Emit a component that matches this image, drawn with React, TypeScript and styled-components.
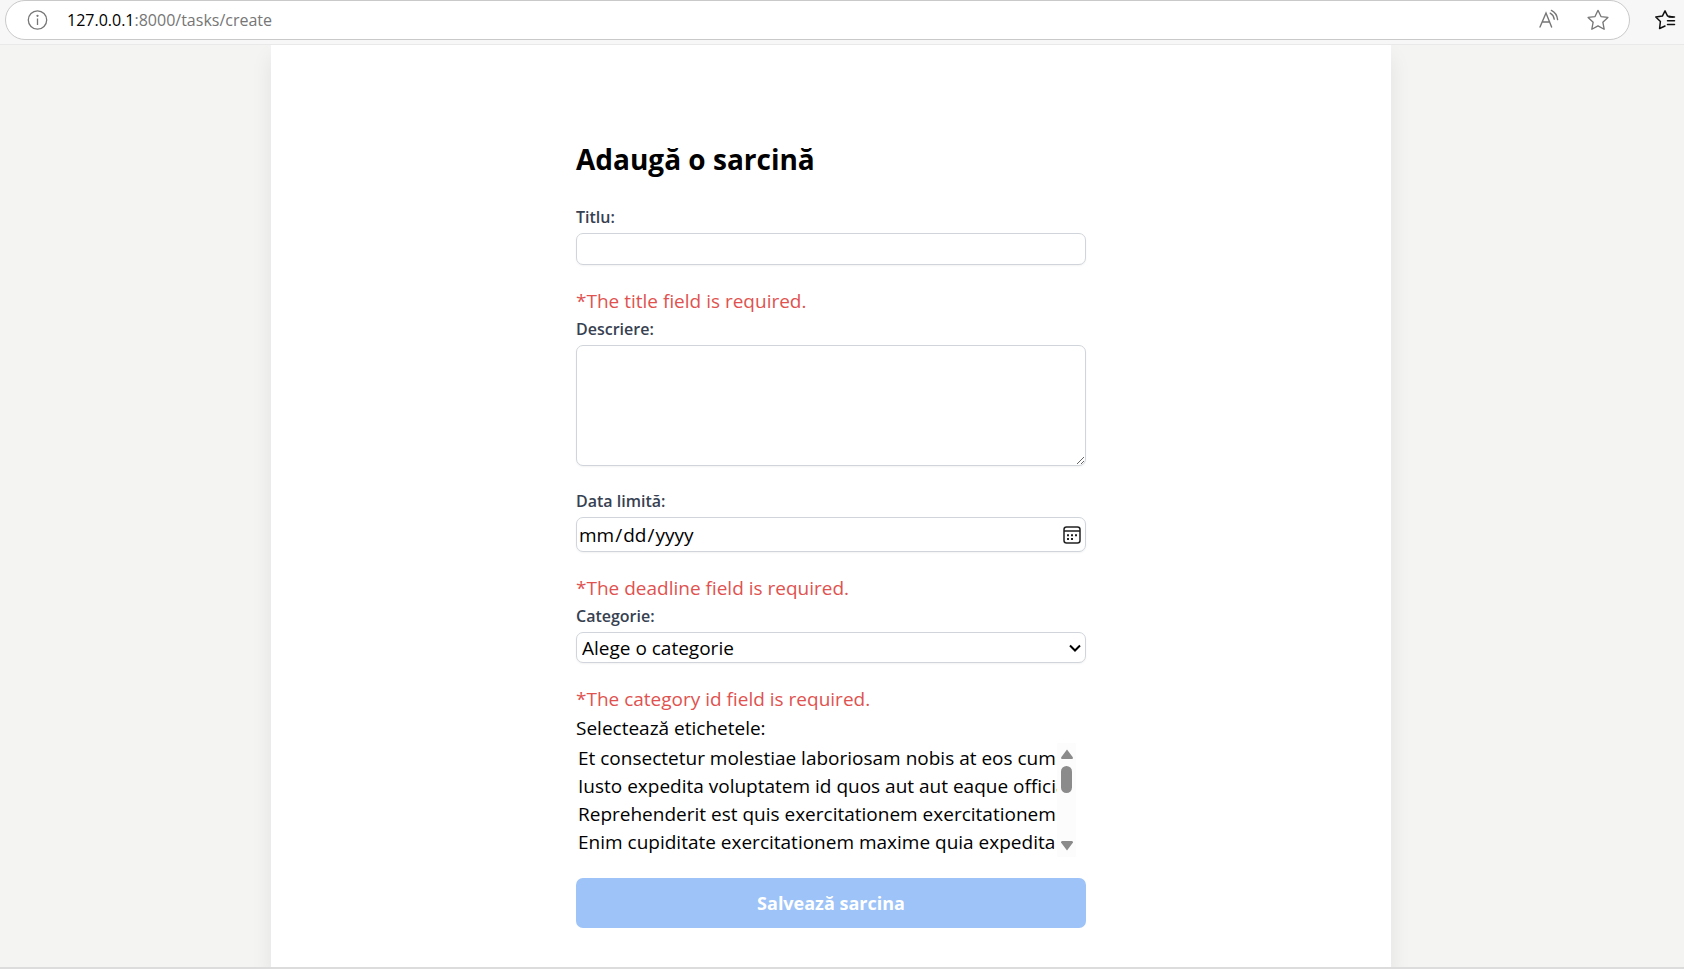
import React from "react";
import styled, { createGlobalStyle } from "styled-components";

const GlobalStyle = createGlobalStyle`
  *, *::before, *::after { box-sizing: border-box; }
  html, body, #root { height: 100%; }
  body {
    margin: 0;
    background: #f4f4f3;
    color: #000;
    font-family: "Open Sans", "Noto Sans", sans-serif;
    font-size: 19px;
  }
  button, input, select, textarea { font: inherit; color: inherit; margin: 0; }
`;

const Window = styled.div`
  display: flex;
  flex-direction: column;
  min-height: 100%;
  border-bottom: 2px solid #dcdcdc;
`;

const Toolbar = styled.header`
  display: flex;
  align-items: center;
  height: 45px;
  padding: 0 8px 5px 5px;
  gap: 24px;
  background: #f7f7f7;
  border-bottom: 1px solid #e9e9e9;
`;

const AddressBar = styled.div`
  display: flex;
  flex: 1;
  align-items: center;
  height: 40px;
  padding: 0 20px;
  background: #fff;
  border: 1px solid #c9c9c9;
  border-radius: 20px;
`;

const IconButton = styled.button<{ $dark?: boolean }>`
  display: flex;
  padding: 0;
  border: 0;
  background: none;
  color: ${(p) => (p.$dark ? "#111" : "#767676")};
`;

const Url = styled.div`
  flex: 1;
  padding-left: 19px;
  font-size: 16px;
  line-height: 24px;
  color: #767676;
`;

const Host = styled.span`
  color: #000;
`;

const BarActions = styled.div`
  display: flex;
  gap: 28px;
`;

const Content = styled.main`
  display: flex;
  flex: 1;
  justify-content: center;
  padding: 0 22px 0 0;
  overflow: hidden;
`;

const Sheet = styled.div`
  width: 100%;
  max-width: 1120px;
  padding: 94px 16px 39px;
  background: #fff;
  box-shadow: 0 12px 20px rgba(0, 0, 0, 0.08);
`;

const Form = styled.form`
  display: flex;
  flex-direction: column;
  width: 100%;
  max-width: 510px;
  margin: 0 auto;
`;

const Title = styled.h1`
  margin: 0 0 25px;
  font-size: 28px;
  font-weight: 700;
  line-height: 40px;
`;

const Label = styled.label`
  margin-bottom: 2px;
  font-size: 16px;
  font-weight: 600;
  line-height: 27px;
  color: #374151;
`;

const ListLabel = styled.label`
  line-height: 29px;
`;

const Control = styled.div<{ $height: number }>`
  display: flex;
  position: relative;
  height: ${(p) => p.$height}px;
  margin-bottom: 22px;

  & > input, & > select, & > textarea {
    width: 100%;
    padding: 0 1px;
    background: #fff;
    border: 1px solid #d1d5db;
    border-radius: 7px;
    box-shadow: 0 1px 2px rgba(0, 0, 0, 0.05);
    outline: none;
  }
`;

const TextInput = styled.input``;

const DateInput = styled.input`
  &::-webkit-calendar-picker-indicator { opacity: 0; }
`;

const TextArea = styled.textarea`
  resize: vertical;
`;

const Dropdown = styled.select`
  appearance: none;
  && { padding: 0 5px; }
`;

const ControlIcon = styled.span`
  display: flex;
  position: absolute;
  right: 5px;
  top: 0;
  bottom: 0;
  align-items: center;
  pointer-events: none;
`;

const ErrorText = styled.div`
  line-height: 29px;
  color: #e0524f;
`;

const TagPicker = styled.div`
  display: flex;
  width: 500px;
  max-width: 100%;
  height: 114px;
  margin-bottom: 21px;
`;

const TagList = styled.select`
  flex: 1;
  align-self: flex-end;
  min-width: 0;
  height: 112px;
  padding: 0;
  border: 0;
  background: none;
  outline: none;
  overflow-y: scroll;
  scrollbar-width: none;

  option {
    min-height: 28px;
    padding: 0 2px;
    line-height: 28px;
  }
`;

const ScrollTrack = styled.div`
  display: flex;
  flex-direction: column;
  align-items: center;
  width: 19px;
  padding: 6px 0;
  background: #fcfcfc;
`;

const ScrollThumb = styled.div`
  width: 11px;
  height: 27px;
  margin: 7px 0 auto;
  border-radius: 6px;
  background: #8b8b8b;
`;

const SubmitButton = styled.button`
  height: 50px;
  border: 0;
  border-radius: 7px;
  background: #9dc3f8;
  color: #fff;
  font-size: 18px;
  font-weight: 700;
`;

const STAR =
  "M10 1.2 L12.7 6.9 L19 7.7 L14.4 12 L15.6 18.4 L10 15.3 L4.4 18.4 L5.6 12 L1 7.7 L7.3 6.9 Z";

const tags = [
  "Et consectetur molestiae laboriosam nobis at eos cum",
  "Iusto expedita voluptatem id quos aut aut eaque officia",
  "Reprehenderit est quis exercitationem exercitationem sit",
  "Enim cupiditate exercitationem maxime quia expedita",
];

export default function App() {
  return (
    <Window>
      <GlobalStyle />
      <Toolbar>
        <AddressBar>
          <IconButton type="button" aria-label="Site information">
            <svg width="22" height="22" viewBox="0 0 22 22" fill="none" stroke="currentColor" strokeWidth="1.3">
              <circle cx="11.5" cy="11" r="9.2" />
              <path d="M11.5 9.5v6.5" />
              <circle cx="11.5" cy="6.8" r="0.5" fill="currentColor" />
            </svg>
          </IconButton>
          <Url>
            <Host>127.0.0.1</Host>:8000/tasks/create
          </Url>
          <BarActions>
            <IconButton type="button" aria-label="Read aloud">
              <svg width="22" height="22" viewBox="0 0 22 22" fill="none" stroke="currentColor" strokeWidth="1.4" strokeLinecap="round">
                <path d="M3 18 L9 4 L14.6 18 M5.1 13h7.6" />
                <path d="M13.2 4.2 Q16.6 6 17.2 10.2 M14.4 1.4 Q19.8 4 20.6 10.6" />
              </svg>
            </IconButton>
            <IconButton type="button" aria-label="Add to favorites">
              <svg width="22" height="22" viewBox="0 0 20 20" fill="none" stroke="currentColor" strokeWidth="1.2" strokeLinejoin="round">
                <path d={STAR} />
              </svg>
            </IconButton>
          </BarActions>
        </AddressBar>
        <IconButton type="button" aria-label="Favorites" $dark>
          <svg width="22" height="22" viewBox="0 0 22 22" fill="none" stroke="currentColor" strokeWidth="1.5" strokeLinejoin="round" strokeLinecap="round">
            <path d="M19 7.9 L13.6 7.1 L11 1.8 L8.4 7.1 L1.8 8 L6.4 12.5 L5.6 19.5 L11 17" />
            <path d="M15 7.9h5.5M13.5 11.7h7M13.5 15.5h7" />
          </svg>
        </IconButton>
      </Toolbar>
      <Content>
        <Sheet>
          <Form onSubmit={(e) => e.preventDefault()}>
            <Title>Adaugă o sarcină</Title>

            <Label htmlFor="title">Titlu:</Label>
            <Control $height={32}>
              <TextInput id="title" type="text" />
            </Control>
            <ErrorText>*The title field is required.</ErrorText>

            <Label htmlFor="description">Descriere:</Label>
            <Control $height={121}>
              <TextArea id="description" />
            </Control>

            <Label htmlFor="deadline">Data limită:</Label>
            <Control $height={35}>
              <DateInput id="deadline" type="date" />
              <ControlIcon>
                <svg width="18" height="18" viewBox="0 0 18 18" fill="none" stroke="#222" strokeWidth="1.5">
                  <rect x="1" y="1" width="16" height="16" rx="2.5" />
                  <path d="M1 5h16" />
                  <path d="M4 9.3h2M8 9.3h2M12 9.3h2M4 13h2M8 13h2" strokeWidth="2" />
                </svg>
              </ControlIcon>
            </Control>
            <ErrorText>*The deadline field is required.</ErrorText>

            <Label htmlFor="category">Categorie:</Label>
            <Control $height={31}>
              <Dropdown id="category">
                <option>Alege o categorie</option>
              </Dropdown>
              <ControlIcon>
                <svg width="12" height="12" viewBox="0 0 12 12" fill="none" stroke="#000" strokeWidth="2">
                  <path d="M1 3.5 L6 8.5 L11 3.5" />
                </svg>
              </ControlIcon>
            </Control>
            <ErrorText>*The category id field is required.</ErrorText>

            <ListLabel htmlFor="tags">Selectează etichetele:</ListLabel>
            <TagPicker>
              <TagList id="tags" multiple size={4}>
                {tags.map((tag) => (
                  <option key={tag}>{tag}</option>
                ))}
              </TagList>
              <ScrollTrack aria-hidden="true">
                <svg width="12" height="10" viewBox="0 0 12 10" fill="#8b8b8b">
                  <path d="M6 0.5 L12 8.5 Q12 10 11 10 H1 Q0 10 0 8.5 Z" />
                </svg>
                <ScrollThumb />
                <svg width="12" height="10" viewBox="0 0 12 10" fill="#8b8b8b">
                  <path d="M6 9.5 L12 1.5 Q12 0 11 0 H1 Q0 0 0 1.5 Z" />
                </svg>
              </ScrollTrack>
            </TagPicker>

            <SubmitButton type="submit">Salvează sarcina</SubmitButton>
          </Form>
        </Sheet>
      </Content>
    </Window>
  );
}
